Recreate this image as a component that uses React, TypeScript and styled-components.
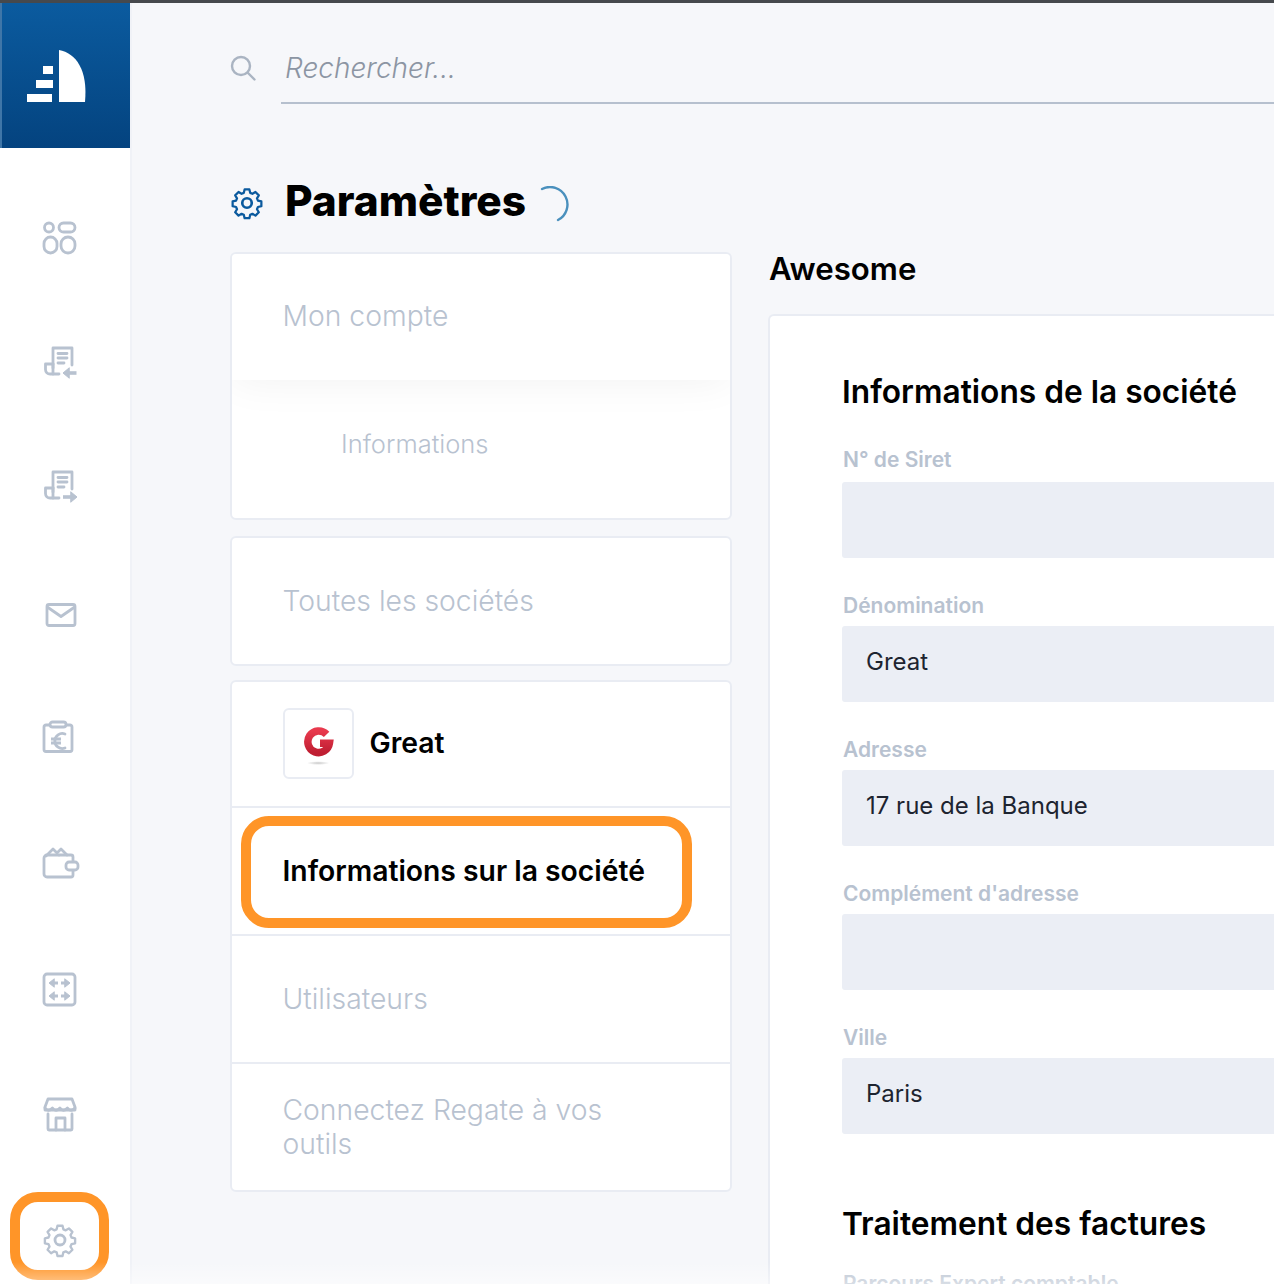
import styled, { createGlobalStyle } from 'styled-components'

const iconColor = '#b8c2d0'
const mutedText = '#b8c2d0'
const borderColor = '#e9ecf3'
const orange = '#ff9528'
const blue = '#0b5a9e'

const GlobalStyle = createGlobalStyle`
  html, body {
    margin: 0;
    padding: 0;
    height: 100%;
    overflow: hidden;
  }
  body {
    font-family: Inter, "Liberation Sans", sans-serif;
    background: #f6f7fa;
  }
  * {
    box-sizing: border-box;
  }
`

const Page = styled.div`
  width: 1274px;
  height: 1284px;
  overflow: hidden;
  position: relative;
  border-top: 3px solid #46494d;
  display: flex;
  background: #f6f7fa;
`

const Sidebar = styled.aside`
  width: 132px;
  flex-shrink: 0;
  background: #fff;
  border-right: 2px solid #f0f2f7;
  display: flex;
  flex-direction: column;
`

const LogoBlock = styled.div`
  height: 145px;
  flex-shrink: 0;
  background: linear-gradient(180deg, #0b5b9f 0%, #04437f 100%);
  border-left: 2px solid #3f76a8;
  padding: 2px 16px 0 0;
  display: flex;
  align-items: center;
  justify-content: center;
`

const Nav = styled.nav`
  padding-top: 28px;
  display: flex;
  flex-direction: column;
`

const NavItem = styled.div<{ $height: number }>`
  height: ${({ $height }) => $height}px;
  display: flex;
  align-items: center;
  justify-content: center;
  padding-right: 10px;
  flex-shrink: 0;
`

const Highlight = styled.div`
  position: absolute;
  border: 10px solid ${orange};
  border-radius: 28px;
  pointer-events: none;
`

const SidebarHighlight = styled(Highlight)`
  left: 10px;
  top: 1189px;
  width: 99px;
  height: 88px;
`

const RowHighlight = styled(Highlight)`
  left: 241px;
  top: 813px;
  width: 451px;
  height: 112px;
`

const BottomFade = styled.div`
  position: absolute;
  left: 0;
  right: 0;
  bottom: 0;
  height: 22px;
  background: linear-gradient(180deg, rgba(255, 255, 255, 0) 0%, rgba(255, 255, 255, 0.45) 100%);
  pointer-events: none;
`

const Main = styled.main`
  flex: 1;
  min-width: 0;
  padding-left: 98px;
  display: flex;
  flex-direction: column;
`

const SearchBar = styled.div`
  height: 100px;
  flex-shrink: 0;
  padding-top: 36px;
  display: flex;
  align-items: flex-start;
  gap: 26px;
`

const SearchIcon = styled.div`
  width: 26px;
  flex-shrink: 0;
  padding-top: 16px;
  line-height: 0;
`

const SearchField = styled.div`
  flex: 1;
  height: 65px;
  border-bottom: 2px solid #b6c0ce;
  font-size: 28px;
  font-style: italic;
  font-weight: 300;
  color: #8c95a3;
  line-height: 58px;
  padding-left: 4px;
  margin-left: -1px;
`

const TitleRow = styled.div`
  height: 149px;
  flex-shrink: 0;
  display: flex;
  align-items: flex-start;
  padding-top: 70px;
`

const TitleIcon = styled.div`
  width: 55px;
  line-height: 0;
  padding-top: 11px;
  margin-left: 2px;
  margin-right: -2px;

  svg {
    margin-left: -4px;
  }
`

const Title = styled.h1`
  margin: 0;
  font-size: 42.4px;
  font-weight: 800;
  line-height: 56px;
  color: #000;
`

const Spinner = styled.div`
  margin-left: 14px;
  padding-top: 13px;
  line-height: 0;
`

const Columns = styled.div`
  display: flex;
  gap: 36px;
  align-items: flex-start;
`

const LeftColumn = styled.div`
  width: 502px;
  flex-shrink: 0;
  display: flex;
  flex-direction: column;
`

const Card = styled.div<{ $gap: number }>`
  background: #fff;
  border: 2px solid ${borderColor};
  border-radius: 6px;
  margin-bottom: ${({ $gap }) => $gap}px;
  overflow: hidden;
`

const MenuRow = styled.div<{ $divider?: boolean }>`
  height: ${({ $divider }) => ($divider ? 128 : 126)}px;
  padding: 0 50.5px;
  display: flex;
  align-items: center;
  font-size: 28.3px;
  font-weight: 300;
  line-height: 34px;
  color: ${mutedText};
  border-top: ${({ $divider }) => ($divider ? `2px solid ${borderColor}` : 'none')};
`

const AccountRow = styled(MenuRow)`
  padding-bottom: 2px;
  position: relative;
  background: #fff;
  box-shadow: 0 0 44px rgba(0, 0, 0, 0.06);
`

const SubMenuRow = styled.div`
  height: 138px;
  padding: 0 0 12px 109px;
  display: flex;
  align-items: center;
  font-size: 25.5px;
  font-weight: 300;
  color: ${mutedText};
`

const CompanyRow = styled(MenuRow)`
  height: 124px;
  padding-bottom: 2px;
  gap: 16px;
  font-weight: 600;
  color: #000;
`

const ActiveRow = styled(MenuRow)`
  font-weight: 600;
  color: #000;
`

const CompanyLogo = styled.div`
  width: 71px;
  height: 71px;
  flex-shrink: 0;
  border: 2px solid ${borderColor};
  border-radius: 6px;
  padding: 10px 0 0 3px;
  display: flex;
  align-items: center;
  justify-content: center;
`

const RightColumn = styled.div`
  flex: 1;
  min-width: 0;
  margin-top: -8px;
`

const AccountName = styled.h2`
  margin: 0;
  padding-left: 1px;
  height: 70px;
  font-size: 31.2px;
  font-weight: 600;
  line-height: 50px;
  color: #000;
`

const FormCard = styled.div`
  background: #fff;
  border: 2px solid ${borderColor};
  border-right: none;
  border-bottom: none;
  border-radius: 6px 0 0 0;
  padding: 51px 0 0 72px;
  height: 1000px;
`

const SectionTitle = styled.h3`
  margin: 0;
  font-size: 31.7px;
  font-weight: 600;
  line-height: 50px;
  color: #000;
  white-space: nowrap;
`

const Label = styled.label`
  display: block;
  height: 40px;
  padding-left: 1px;
  font-size: 21px;
  font-weight: 600;
  line-height: 56px;
  color: ${mutedText};
  white-space: nowrap;
`

const Field = styled.div`
  height: 144px;

  &:first-child ${Label} {
    line-height: 52px;
  }
`

const FormFields = styled.div<{ $top: number }>`
  padding-top: ${({ $top }) => $top}px;
  margin-bottom: 45px;
`

const FakeInput = styled.div`
  height: 76px;
  margin-top: 8px;
  background: #ebeef5;
  border-radius: 3px 0 0 3px;
  padding-left: 24px;
  font-size: 24px;
  font-weight: 400;
  line-height: 72px;
  color: #1d2430;
`

const navIconProps = {
  width: 40,
  height: 40,
  viewBox: '0 0 40 40',
  fill: 'none',
  stroke: iconColor,
  strokeWidth: 2.8,
  strokeLinejoin: 'round' as const,
  strokeLinecap: 'round' as const,
}

const GearPath = () => (
  <>
    <path d="M17 4.5h6l1 4.3 2.8 1.2 3.8-2.3 4.2 4.2-2.3 3.8 1.2 2.8 4.3 1v6l-4.3 1-1.2 2.8 2.3 3.8-4.2 4.2-3.8-2.3-2.8 1.2-1 4.3h-6l-1-4.3-2.8-1.2-3.8 2.3-4.2-4.2 2.3-3.8-1.2-2.8-4.3-1v-6l4.3-1 1.2-2.8-2.3-3.8 4.2-4.2 3.800 2.300 2.800-1.200z" transform="translate(20 20) scale(0.84) translate(-20 -21.5)" />
    <circle cx="20" cy="20" r="5" />
  </>
)

const LogoMark = () => (
  <svg width="62" height="56" viewBox="0 0 62 56">
    <g fill="#fff">
      <rect x="16" y="17" width="10" height="8" />
      <rect x="9" y="31" width="17" height="8" />
      <rect x="0" y="45" width="25" height="8" />
      <path d="M32 1c17 3 29 20 26 52H32z" />
    </g>
  </svg>
)

const DashboardIcon = () => (
  <svg {...navIconProps}>
    <circle cx="9" cy="9.5" r="4.5" />
    <rect x="19" y="5" width="16" height="9" rx="4.5" />
    <rect x="4" y="19" width="13" height="16" rx="6.5" />
    <rect x="21" y="19" width="14" height="16" rx="7" />
  </svg>
)

const ReceiptBase = () => (
  <>
    <path d="M13 26V6h19v17" />
    <path d="M18 11.5h9M18 16h9M18 21h6" />
    <path d="M19 32H10a4.5 4.5 0 0 1-4.5-4.500V22H13" />
    <path d="M13 22v10" />
  </>
)

const ReceiptIn = () => (
  <svg {...navIconProps}>
    <ReceiptBase />
    <path d="M36.5 31H28" strokeWidth={3.6} strokeLinecap="butt" />
    <path d="M29 26l-6 5 6 5z" fill={iconColor} strokeWidth={1} />
  </svg>
)

const ReceiptOut = () => (
  <svg {...navIconProps}>
    <ReceiptBase />
    <path d="M23 31h9" strokeWidth={3.6} strokeLinecap="butt" />
    <path d="M31 26l6 5-6 5z" fill={iconColor} strokeWidth={1} />
  </svg>
)

const MailIcon = () => (
  <svg {...navIconProps}>
    <rect x="7" y="12.5" width="28" height="21" rx="2" />
    <path d="M8 15.5l13 9 13-9" />
  </svg>
)

const EuroClipboardIcon = () => (
  <svg {...navIconProps}>
    <path d="M10 6H7a2 2 0 0 0-2 2v22.5a2 2 0 0 0 2 2h24a2 2 0 0 0 2-2V8a2 2 0 0 0-2-2h-3" transform="translate(-1 0)" />
    <rect x="10" y="3" width="16" height="5" rx="2.5" />
    <path d="M25 15a7.5 7.5 0 1 0 0 14" />
    <path d="M11 20h10M11 24h10" strokeLinecap="butt" />
  </svg>
)

const WalletIcon = () => (
  <svg {...navIconProps}>
    <g transform="translate(0 -2)">
      <path d="M33 27v5a2 2 0 0 1-2 2H7a3 3 0 0 1-3-3V15a3 3 0 0 1 3-3h24a2 2 0 0 1 2 2v5" />
      <path d="M6 13l7-7 6 6M17 10l4-4 6 6" />
      <rect x="26" y="19" width="12" height="8" rx="3" fill="#fff" />
    </g>
  </svg>
)

const ArrowsIcon = () => (
  <svg {...navIconProps}>
    <rect x="4" y="4" width="31" height="31" rx="3" />
    <path d="M14 13h4M21 13h4M14 26h4M21 26h4" strokeWidth={3} strokeLinecap="butt" />
    <path d="M14 9l-5 4 5 4zM25 9l5 4-5 4zM14 22l-5 4 5 4zM25 22l5 4-5 4z" fill={iconColor} strokeWidth={1} />
  </svg>
)

const StoreIcon = () => (
  <svg {...navIconProps}>
    <path d="M8 19v15a1 1 0 0 0 1 1h22a1 1 0 0 0 1-1V19" />
    <path d="M8 4h24l3 8v3H5v-3z" />
    <path d="M5 13c2 3 5 3 7.5 0 2 3 5 3 7.5 0 2 3 5 3 7.5 0 2 3 5 3 7.5 0" />
    <path d="M16 35V23h9v12" />
  </svg>
)

const GearIcon = () => (
  <svg {...navIconProps}>
    <GearPath />
  </svg>
)

const CompanyMark = () => (
  <svg width="32" height="44" viewBox="0 0 34 44">
    <defs>
      <linearGradient id="g-red" x1="0" y1="0" x2="0" y2="1">
        <stop offset="0" stopColor="#e8394d" />
        <stop offset="1" stopColor="#bf1e32" />
      </linearGradient>
      <radialGradient id="g-shadow">
        <stop offset="0" stopColor="#c9c9c9" />
        <stop offset="1" stopColor="#ffffff" />
      </radialGradient>
    </defs>
    <path d="M24 7.5A11.5 11.5 0 1 0 27 17H17" fill="none" stroke="url(#g-red)" strokeWidth="8" />
    <ellipse cx="15" cy="38" rx="12" ry="2" fill="url(#g-shadow)" />
  </svg>
)

const fields = [
  { label: 'N° de Siret', value: '' },
  { label: 'Dénomination', value: 'Great' },
  { label: 'Adresse', value: '17 rue de la Banque' },
  { label: "Complément d'adresse", value: '' },
  { label: 'Ville', value: 'Paris' },
]

const navItems = [
  { icon: <DashboardIcon />, height: 124 },
  { icon: <ReceiptIn />, height: 124 },
  { icon: <ReceiptOut />, height: 124 },
  { icon: <MailIcon />, height: 128 },
  { icon: <EuroClipboardIcon />, height: 125 },
  { icon: <WalletIcon />, height: 127 },
  { icon: <ArrowsIcon />, height: 124 },
  { icon: <StoreIcon />, height: 126 },
  { icon: <GearIcon />, height: 124 },
]

export default function App() {
  return (
    <>
      <GlobalStyle />
      <Page>
        <Sidebar>
          <LogoBlock>
            <LogoMark />
          </LogoBlock>
          <Nav>
            {navItems.map(({ icon, height }, i) => (
              <NavItem key={i} $height={height}>
                {icon}
              </NavItem>
            ))}
          </Nav>
        </Sidebar>
        <Main>
          <SearchBar>
            <SearchIcon>
              <svg width="26" height="26" viewBox="0 0 26 26" fill="none" stroke="#aab4c2" strokeWidth="2.4" strokeLinecap="round">
                <circle cx="11" cy="11" r="9" />
                <path d="M18 18l6.5 6.5" />
              </svg>
            </SearchIcon>
            <SearchField>Rechercher...</SearchField>
          </SearchBar>
          <TitleRow>
            <TitleIcon>
              <svg width="38" height="38" viewBox="0 0 40 40" fill="none" stroke={blue} strokeWidth="2.8" strokeLinejoin="round">
                <GearPath />
              </svg>
            </TitleIcon>
            <Title>Paramètres</Title>
            <Spinner>
              <svg width="30" height="36" viewBox="0 0 30 36" fill="none" stroke="#4a90bd" strokeWidth="2.4" strokeLinecap="round">
                <path d="M2 3a17 17 0 0 1 16 31" />
              </svg>
            </Spinner>
          </TitleRow>
          <Columns>
            <LeftColumn>
              <Card $gap={16}>
                <AccountRow>Mon compte</AccountRow>
                <SubMenuRow>Informations</SubMenuRow>
              </Card>
              <Card $gap={14}>
                <MenuRow>Toutes les sociétés</MenuRow>
              </Card>
              <Card $gap={0}>
                <CompanyRow>
                  <CompanyLogo>
                    <CompanyMark />
                  </CompanyLogo>
                  Great
                </CompanyRow>
                <ActiveRow $divider>Informations sur la société</ActiveRow>
                <MenuRow $divider>Utilisateurs</MenuRow>
                <MenuRow $divider>Connectez Regate à vos outils</MenuRow>
              </Card>
            </LeftColumn>
            <RightColumn>
              <AccountName>Awesome</AccountName>
              <FormCard>
                <SectionTitle>Informations de la société</SectionTitle>
                <FormFields $top={17}>
                  {fields.map((field) => (
                    <Field key={field.label}>
                      <Label>{field.label}</Label>
                      <FakeInput>{field.value}</FakeInput>
                    </Field>
                  ))}
                </FormFields>
                <SectionTitle>Traitement des factures</SectionTitle>
                <FormFields $top={9}>
                  <Field>
                    <Label>Parcours Expert comptable</Label>
                    <FakeInput />
                  </Field>
                </FormFields>
              </FormCard>
            </RightColumn>
          </Columns>
        </Main>
        <RowHighlight />
        <SidebarHighlight />
        <BottomFade />
      </Page>
    </>
  )
}
